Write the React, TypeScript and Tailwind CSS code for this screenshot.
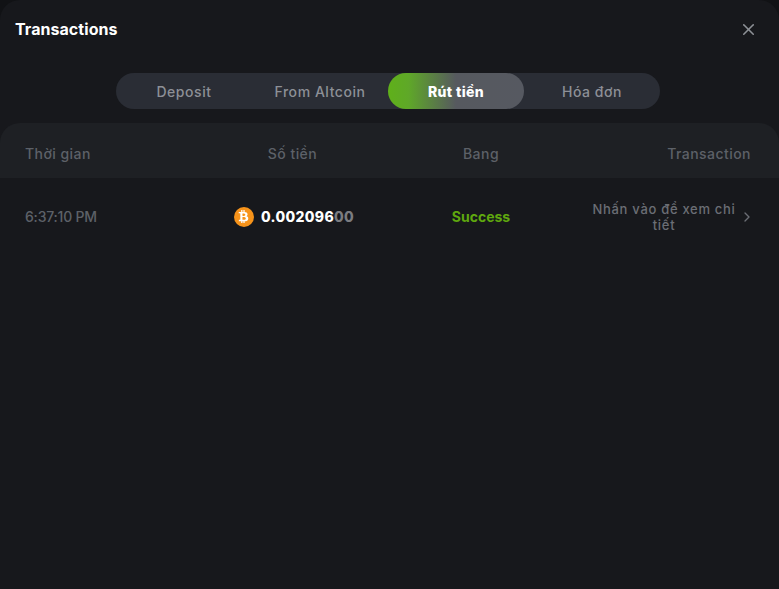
import { ChevronRight, X } from "lucide-react";
import { FaBtc } from "react-icons/fa";

const tabs = ["Deposit", "From Altcoin", "Rút tiền", "Hóa đơn"];
const activeTab = "Rút tiền";
const cols = "grid grid-cols-[150px_235px_142px_1fr] items-center pl-[25px] pr-[28px]";

export default function App() {
  return (
    <div className="h-[589px] w-full overflow-hidden bg-[#111215] font-['Inter','Liberation_Sans',sans-serif]">
      <div className="h-full rounded-t-[20px] bg-[#17181c]">
        <div className="flex h-[58px] items-center justify-between pl-[15px] pr-[21px]">
          <h1 className="text-[16px] font-bold tracking-[0.05px] text-white">Transactions</h1>
          <button type="button" className="text-[#8d9096]">
            <X size={19} strokeWidth={2} />
          </button>
        </div>

        <div className="mt-[15px] flex justify-center pr-[3px]">
          <div className="flex h-[36px] w-[544px] rounded-full bg-[#2a2d35]">
            {tabs.map((tab) =>
              tab === activeTab ? (
                <button
                  key={tab}
                  type="button"
                  className="h-full w-[136px] rounded-full bg-[linear-gradient(90deg,#5fb01a_0%,#5fa828_15%,#56595f_50%,#565961_100%)] text-[14px] font-extrabold tracking-[0.35px] text-white"
                >
                  {tab}
                </button>
              ) : (
                <button
                  key={tab}
                  type="button"
                  className="h-full w-[136px] rounded-full text-[14px] font-medium tracking-[0.55px] text-[#8d9097]"
                >
                  {tab}
                </button>
              )
            )}
          </div>
        </div>

        <div className="mt-[14px] rounded-t-[20px]">
          <div className={`${cols} h-[55px] rounded-t-[20px] bg-[#1e2024] pt-[6px] text-[14px] font-medium tracking-[0.45px] text-[#5d6168]`}>
            <div>Thời gian</div>
            <div className="text-center">Số tiền</div>
            <div className="text-center">Bang</div>
            <div className="text-right">Transaction</div>
          </div>

          <div className={`${cols} h-[77px] text-[14px]`}>
            <div className="font-medium tracking-[-0.2px] text-[#5d6168]">6:37:10 PM</div>
            <div className="flex items-center justify-center gap-[7px] pl-[3px]">
              <span className="flex h-[20px] w-[20px] items-center justify-center rounded-full bg-[#f7931a] text-white">
                <FaBtc size={13} />
              </span>
              <span className="font-extrabold tracking-[0.35px] text-white">
                0.002096<span className="text-[#7b7c80]">00</span>
              </span>
            </div>
            <div className="text-center font-bold text-[#5fa80e]">Success</div>
            <div className="flex items-center justify-end text-[#6b6e75]">
              <span className="w-[146px] text-center text-[13px] font-medium leading-[16px] tracking-[0.7px]">
                Nhấn vào để xem chi tiết
              </span>
              <ChevronRight size={16} className="-ml-[2px] shrink-0 translate-x-[4px]" />
            </div>
          </div>
        </div>
      </div>
    </div>
  );
}
